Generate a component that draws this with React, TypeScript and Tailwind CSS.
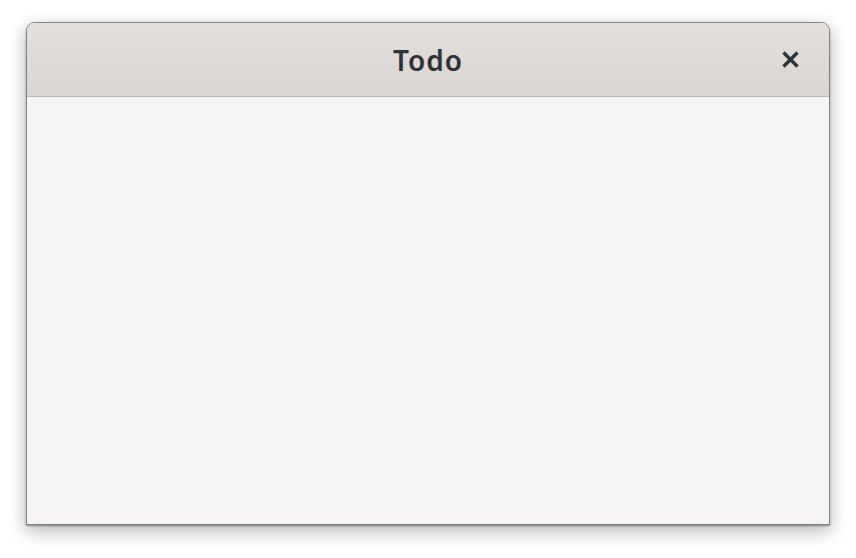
export default function App() {
  return (
    <div className="w-[856px] h-[558px] bg-white pt-[22px] pl-[26px] font-['Noto_Sans',sans-serif]">
      <div className="w-[804px] h-[503px] flex flex-col rounded-t-[9px] border border-[#828282] bg-[#f6f5f4] shadow-[0_1px_2px_rgba(0,0,0,0.35),0_6px_18px_rgba(0,0,0,0.3)] overflow-hidden">
        <header className="relative h-[74px] shrink-0 flex items-center justify-center border-b border-[#b8b3ae] bg-gradient-to-b from-[#e2dfdc] to-[#dad6d2]">
          <h1 className="text-[28px] font-semibold text-[#2e3436] tracking-[1px] leading-none mt-[1px]">Todo</h1>
          <button className="absolute right-[30px] top-[28px] w-[17px] h-[17px] flex items-center justify-center text-[#2e3436]">
            <svg width="17" height="17" viewBox="0 0 17 17">
              <path d="M1.5 1.5 L15.5 15.5 M15.5 1.5 L1.5 15.5" stroke="currentColor" strokeWidth="3.4" strokeLinecap="butt" />
            </svg>
          </button>
        </header>
        <main className="flex-1 bg-[#f6f5f4]" />
      </div>
    </div>
  );
}
